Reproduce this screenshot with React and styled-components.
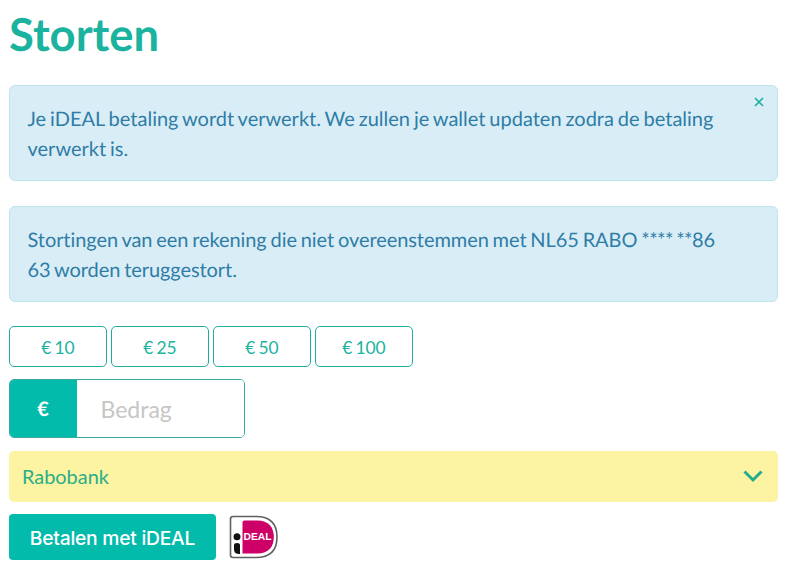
import React from 'react';
import styled, { createGlobalStyle } from 'styled-components';

const teal = '#03bbab';
const tealText = '#1bb3a0';

const GlobalStyle = createGlobalStyle`
  *, *::before, *::after { box-sizing: border-box; }
  body {
    margin: 0;
    background: #fff;
    font-family: Lato, sans-serif;
    font-variant-ligatures: none;
    text-rendering: geometricPrecision;
  }
  button, input { font-family: inherit; margin: 0; }
`;

const Page = styled.main`
  width: 800px;
  height: 574px;
  padding: 7px 22px 0 9px;
  display: flex;
  flex-direction: column;
  align-items: stretch;
  overflow: hidden;
`;

const Title = styled.h1`
  margin: 0 0 24px;
  height: 54px;
  font-size: 45.4px;
  line-height: 54px;
  font-weight: 700;
  color: ${tealText};
`;

const Alert = styled.div`
  display: flex;
  justify-content: space-between;
  height: 96px;
  flex: none;
  margin-bottom: 25px;
  padding: 18px 12px 0 17.5px;
  border: 1px solid #bce5ec;
  border-radius: 6px;
  background: #d9edf6;
  color: #2f7da6;
`;

const AlertText = styled.p`
  margin: 0;
  font-size: 20px;
  line-height: 30px;
  word-spacing: -1.2px;
  letter-spacing: ${({ $tracking }) => $tracking || '0'};
  white-space: nowrap;
`;

const Mask = styled.span`
  letter-spacing: -0.6px;
`;

const Close = styled.button`
  display: flex;
  width: 12px;
  height: 12px;
  margin-top: -8px;
  padding: 0;
  border: 0;
  background: none;
  color: ${tealText};
`;

const Presets = styled.div`
  display: flex;
  gap: 4px;
  margin: -1px 0 12px;
`;

const Preset = styled.button`
  width: 98px;
  height: 41px;
  padding: 2px 0 0;
  border: 1px solid #23ada0;
  border-radius: 5px;
  background: #fff;
  color: ${tealText};
  font-size: 17.4px;
  word-spacing: -1.4px;
`;

const Amount = styled.label`
  display: flex;
  flex: none;
  width: 236px;
  height: 59px;
  margin-bottom: 13px;
  border: 1px solid #35a9a2;
  border-radius: 5px;
  overflow: hidden;
`;

const Currency = styled.span`
  display: flex;
  align-items: center;
  justify-content: center;
  width: 68px;
  margin-left: -1px;
  background: ${teal};
  color: #fff;
  font-size: 20px;
  font-weight: 700;
`;

const AmountInput = styled.input`
  flex: 1;
  min-width: 0;
  padding: 0 0 0 23.5px;
  border: 0;
  outline: 0;
  background: #fff;
  font-size: 23px;
  &::placeholder { color: #c6c6c6; opacity: 1; }
`;

const BankSelect = styled.button`
  display: flex;
  flex: none;
  align-items: center;
  justify-content: space-between;
  height: 51px;
  margin-bottom: 12px;
  padding: 0 15px 1px 13px;
  border: 0;
  border-radius: 5px;
  background: #fcf3a3;
  color: #2aae88;
  font-size: 19.9px;
`;

const PayRow = styled.div`
  display: flex;
  align-items: flex-start;
  gap: 13px;
`;

const PayButton = styled.button`
  width: 207px;
  height: 46px;
  padding: 1px 0 0;
  border: 0;
  border-radius: 4px;
  background: ${teal};
  color: #fff;
  font-family: Inter, sans-serif;
  font-size: 19.3px;
  font-weight: 500;
  letter-spacing: -0.25px;
  white-space: nowrap;
`;

const LogoText = styled.text`
  font-family: 'Liberation Sans', sans-serif;
  font-size: 10.2px;
  font-weight: 700;
  fill: #fff;
`;

function IdealLogo() {
  return (
    <svg width="50" height="46" viewBox="0 0 50 46" role="img" aria-label="iDEAL">
      <path d="M4 2.5H27C42 2.5 48 11 48 23S42 43.5 27 43.5H4Q1.5 43.5 1.5 41V5Q1.5 2.5 4 2.5Z" fill="#fff" stroke="#606060" strokeWidth="1.6" />
      <path d="M15.5 6.5H28C40 6.5 44.8 13.5 44.8 23S40 39.5 28 39.5H13.5V8.5Q13.5 6.5 15.5 6.5Z" fill="#cc0066" />
      <circle cx="8" cy="22.8" r="3.5" fill="#111" />
      <path d="M5 31Q5 29 8 29Q11 29 11 31V40H9.5Q5 39.5 5 35.5Z" fill="#111" />
      <LogoText x="14.5" y="26" textLength="28" lengthAdjust="spacingAndGlyphs">DEAL</LogoText>
    </svg>
  );
}

const amounts = [10, 25, 50, 100];

export default function App() {
  return (
    <>
      <GlobalStyle />
      <Page>
        <Title>Storten</Title>
        <Alert>
          <AlertText>
            Je iDEAL betaling wordt verwerkt. We zullen je wallet updaten zodra de betaling
            <br />
            verwerkt is.
          </AlertText>
          <Close aria-label="Sluiten">
            <svg width="12" height="12" viewBox="0 0 12 12">
              <path d="M2 2L10 10M10 2L2 10" stroke="currentColor" strokeWidth="1.7" />
            </svg>
          </Close>
        </Alert>
        <Alert>
          <AlertText $tracking="-0.07px">
            Stortingen van een rekening die niet overeenstemmen met NL65 RABO <Mask>**** **</Mask>86
            <br />
            63 worden teruggestort.
          </AlertText>
        </Alert>
        <Presets>
          {amounts.map((amount) => (
            <Preset key={amount}>€ {amount}</Preset>
          ))}
        </Presets>
        <Amount>
          <Currency>€</Currency>
          <AmountInput placeholder="Bedrag" />
        </Amount>
        <BankSelect>
          Rabobank
          <svg width="20" height="14" viewBox="0 0 20 14" fill="none">
            <path d="M1.5 2.5L10 11L18.5 2.5" stroke="#22ae8c" strokeWidth="3" />
          </svg>
        </BankSelect>
        <PayRow>
          <PayButton>Betalen met iDEAL</PayButton>
          <IdealLogo />
        </PayRow>
      </Page>
    </>
  );
}
